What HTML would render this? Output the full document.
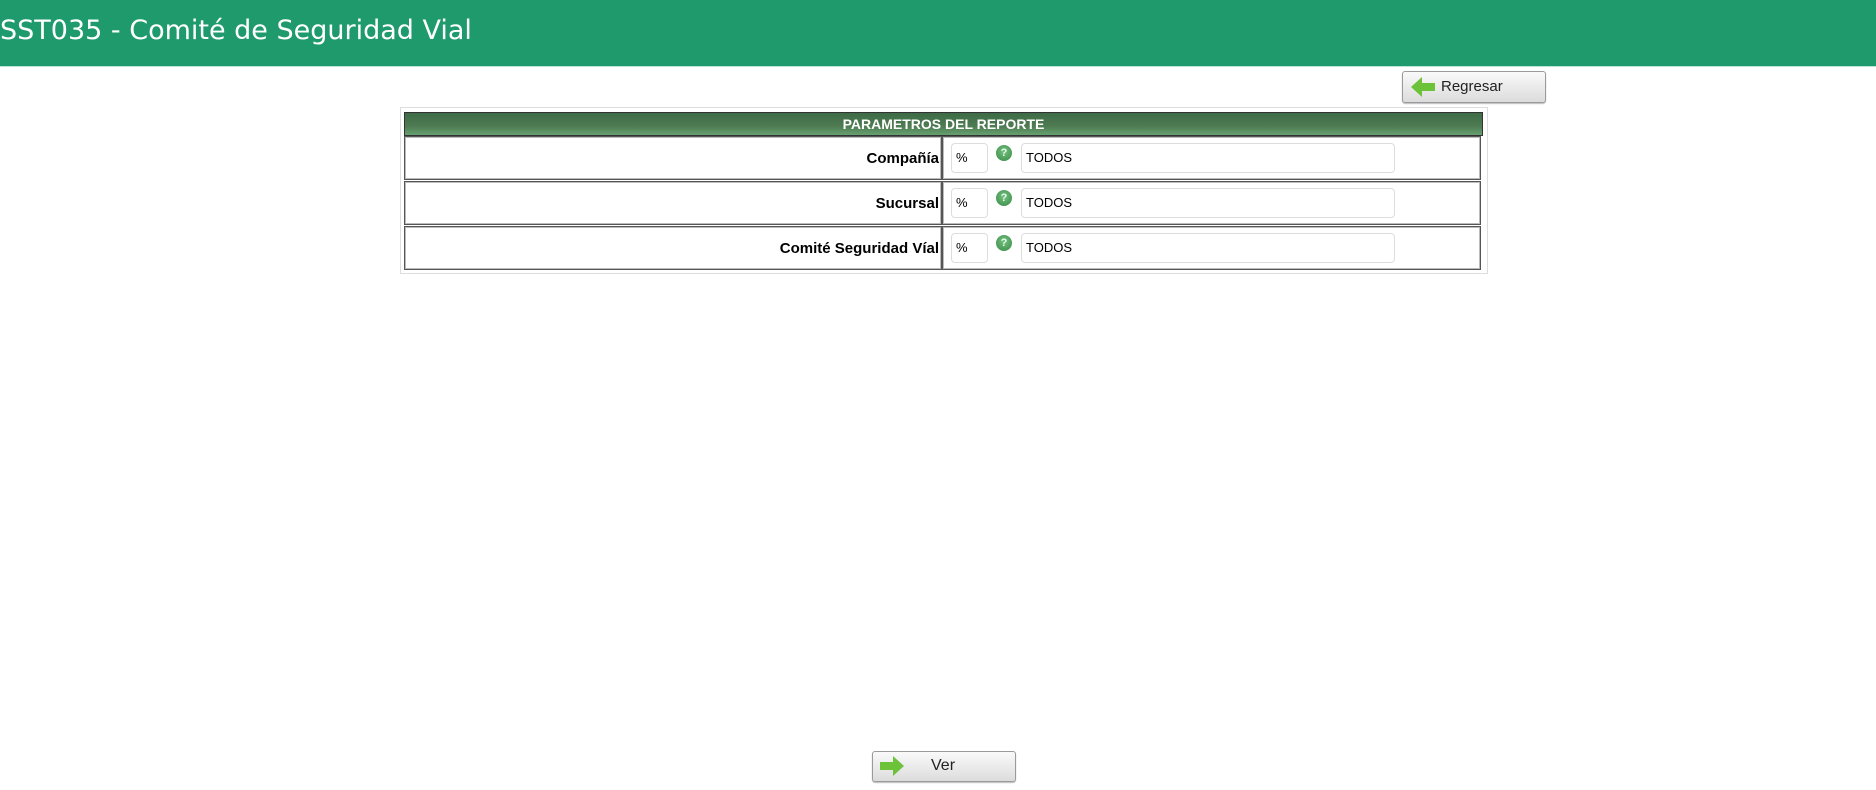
<!DOCTYPE html>
<html><head><meta charset="utf-8"><style>
body{margin:0;width:1876px;height:790px;background:#fff;font-family:"Liberation Sans",sans-serif;position:relative;overflow:hidden}
.hdr{position:absolute;left:0;top:0;width:1876px;height:66px;background:#1e9a6c;border-bottom:1px solid #bfe3d4}
.hdr span{position:absolute;left:0;top:15px;color:#fff;font-size:27px;font-family:"DejaVu Sans",sans-serif}
.btn{position:absolute;border:1px solid #9a9a9a;border-radius:3px;background:linear-gradient(#fafafa,#dcdcdc);box-shadow:0 1px 1px #bbb;font-size:15px;color:#222}
.outer{position:absolute;left:400px;top:107px;width:1086px;height:165px;border:1px solid #ddd}
.bar{position:absolute;left:404px;top:112px;width:1077px;height:22px;background:linear-gradient(#3d6b45,#4e7b52 60%,#66a070);border:1px solid #333;color:#fff;font-weight:bold;font-size:14px;text-align:center;line-height:22px}
.row{position:absolute;left:404px;width:1077px;height:42px}
.lab{position:absolute;left:0;top:0;width:538px;text-align:right;font-weight:bold;font-size:15px;line-height:44px;box-sizing:border-box;padding-right:2px;height:44px;border:1px solid #555;box-shadow:inset 0 0 0 1px #bbb}
.val{position:absolute;left:538px;top:0;width:539px;height:44px;border:1px solid #555;box-shadow:inset 0 0 0 1px #bbb;box-sizing:border-box}
.in{position:absolute;top:6px;height:30px;border:1px solid #ddd;border-radius:4px;box-sizing:border-box;font-size:13px;line-height:28px;padding-left:4px;background:#fff}
.ic{position:absolute;left:53px;top:8px;width:16px;height:16px;border-radius:50%;background:radial-gradient(circle at 50% 40%,#7cbf80,#2f8a45);color:#dfe;font-size:11px;font-weight:bold;text-align:center;line-height:16px}
</style></head><body>
<div class="hdr"><span>SST035 - Comité de Seguridad Vial</span></div>
<div class="btn" style="left:1402px;top:71px;width:142px;height:30px">
<svg style="position:absolute;left:7px;top:4px" width="26" height="22" viewBox="0 0 26 22"><path d="M1 11 L12 1 V7 H25 V15 H12 V21 Z" fill="#6cc33a"/></svg>
<span style="position:absolute;left:38px;top:6px">Regresar</span></div>
<div class="outer"></div>
<div class="bar">PARAMETROS DEL REPORTE</div>
<div class="row" style="top:136px"><div class="lab">Compañía</div><div class="val"><div class="in" style="left:8px;width:37px">%</div><div class="ic">?</div><div class="in" style="left:78px;width:374px">TODOS</div></div></div>
<div class="row" style="top:181px"><div class="lab">Sucursal</div><div class="val"><div class="in" style="left:8px;width:37px">%</div><div class="ic">?</div><div class="in" style="left:78px;width:374px">TODOS</div></div></div>
<div class="row" style="top:226px"><div class="lab">Comité Seguridad Víal</div><div class="val"><div class="in" style="left:8px;width:37px">%</div><div class="ic">?</div><div class="in" style="left:78px;width:374px">TODOS</div></div></div>
<div class="btn" style="left:872px;top:751px;width:142px;height:29px">
<svg style="position:absolute;left:6px;top:3px" width="26" height="22" viewBox="0 0 26 22"><path d="M25 11 L14 1 V7 H1 V15 H14 V21 Z" fill="#6cc33a"/></svg>
<span style="position:absolute;left:58px;top:5px;font-size:16px">Ver</span></div>
</body></html>
